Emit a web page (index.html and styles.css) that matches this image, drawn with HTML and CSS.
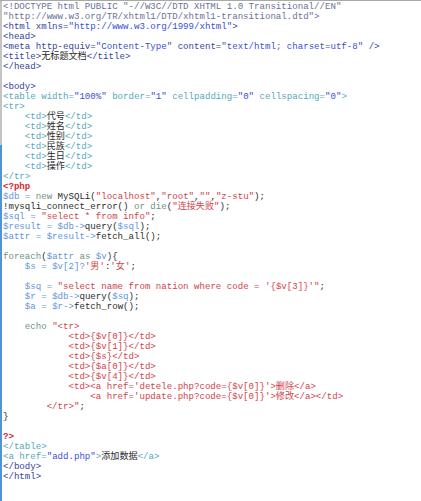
FILE: index.html
```html
<!DOCTYPE html>
<html lang="zh">
<head>
  <meta charset="UTF-8">
  <title>代码视图</title>
  <link rel="stylesheet" href="styles.css">
</head>
<body>
<div class="editor"><pre class="code"><span class="dt">&lt;!DOCTYPE html PUBLIC "-//W3C//DTD XHTML 1.0 Transitional//EN"</span>
<span class="dt">"http://www.w3.org/TR/xhtml1/DTD/xhtml1-transitional.dtd"&gt;</span>
<span class="n">&lt;html xmlns=</span><span class="s">"http://www.w3.org/1999/xhtml"</span><span class="n">&gt;</span>
<span class="n">&lt;head&gt;</span>
<span class="n">&lt;meta http-equiv=</span><span class="s">"Content-Type"</span><span class="n"> content=</span><span class="s">"text/html; charset=utf-8"</span><span class="n"> /&gt;</span>
<span class="n">&lt;title&gt;</span>无标题文档<span class="n">&lt;/title&gt;</span>
<span class="n">&lt;/head&gt;</span>

<span class="n">&lt;body&gt;</span>
<span class="t">&lt;table width=</span><span class="s">"100%"</span><span class="t"> border=</span><span class="s">"1"</span><span class="t"> cellpadding=</span><span class="s">"0"</span><span class="t"> cellspacing=</span><span class="s">"0"</span><span class="t">&gt;</span>
<span class="t">&lt;tr&gt;</span>
    <span class="t">&lt;td&gt;</span>代号<span class="t">&lt;/td&gt;</span>
    <span class="t">&lt;td&gt;</span>姓名<span class="t">&lt;/td&gt;</span>
    <span class="t">&lt;td&gt;</span>性别<span class="t">&lt;/td&gt;</span>
    <span class="t">&lt;td&gt;</span>民族<span class="t">&lt;/td&gt;</span>
    <span class="t">&lt;td&gt;</span>生日<span class="t">&lt;/td&gt;</span>
    <span class="t">&lt;td&gt;</span>操作<span class="t">&lt;/td&gt;</span>
<span class="t">&lt;/tr&gt;</span>
<span class="p">&lt;?php</span>
<span class="v">$db = </span><span class="k">new</span> MySQLi(<span class="q">"localhost"</span>,<span class="q">"root"</span>,<span class="q">""</span>,<span class="q">"z-stu"</span>);
!mysqli_connect_error() <span class="k">or die</span>(<span class="q">"连接失败"</span>);
<span class="v">$sql = </span><span class="q">"select * from info"</span>;
<span class="v">$result = $db-&gt;</span>query(<span class="v">$sql</span>);
<span class="v">$attr = $result-&gt;</span>fetch_all();

<span class="k">foreach</span>(<span class="v">$attr</span> <span class="k">as</span> <span class="v">$v</span>){
    <span class="v">$s = $v[2]?</span><span class="q">'男'</span>:<span class="q">'女'</span>;

    <span class="v">$sq = </span><span class="q">"select name from nation where code = '{$v[3]}'"</span>;
    <span class="v">$r = $db-&gt;</span>query(<span class="v">$sq</span>);
    <span class="v">$a = $r-&gt;</span>fetch_row();

    <span class="k">echo</span> <span class="q">"&lt;tr&gt;
            &lt;td&gt;{$v[0]}&lt;/td&gt;
            &lt;td&gt;{$v[1]}&lt;/td&gt;
            &lt;td&gt;{$s}&lt;/td&gt;
            &lt;td&gt;{$a[0]}&lt;/td&gt;
            &lt;td&gt;{$v[4]}&lt;/td&gt;
            &lt;td&gt;&lt;a href='detele.php?code={$v[0]}'&gt;删除&lt;/a&gt;
                &lt;a href='update.php?code={$v[0]}'&gt;修改&lt;/a&gt;&lt;/td&gt;
        &lt;/tr&gt;"</span>;
}

<span class="p">?&gt;</span>
<span class="t">&lt;/table&gt;</span>
<span class="t">&lt;a href=</span><span class="s">"add.php"</span><span class="t">&gt;</span>添加数据<span class="t">&lt;/a&gt;</span>
<span class="n">&lt;/body&gt;</span>
<span class="n">&lt;/html&gt;</span>
</pre></div>
</body>
</html>
```

FILE: styles.css
```css
* {
  box-sizing: border-box;
}
html, body {
  margin: 0;
  height: 100%;
  background: #fff;
}
.editor {
  height: 100%;
  border-top: 1px solid #a9a9a9;
  padding-left: 2px;
  background: linear-gradient(to bottom, #c4c4c4 144px, #4d94d8 144px) left top / 2px 100% no-repeat, #fff;
}
.code {
  margin: 0;
  padding: 1px 0 0 1px;
  font-family: "Liberation Mono", "Noto Sans CJK SC", monospace;
  font-size: 9.1px;
  line-height: 10px;
  color: #2b2b2b;
  white-space: pre;
}
.dt { color: #6a7397; }
.n  { color: #33449a; }
.t  { color: #55a8bb; }
.s  { color: #3a4fd6; }
.p  { color: #d42a34; font-weight: bold; }
.v  { color: #6295dc; }
.k  { color: #6f927f; }
.q  { color: #cf434b; }
```
